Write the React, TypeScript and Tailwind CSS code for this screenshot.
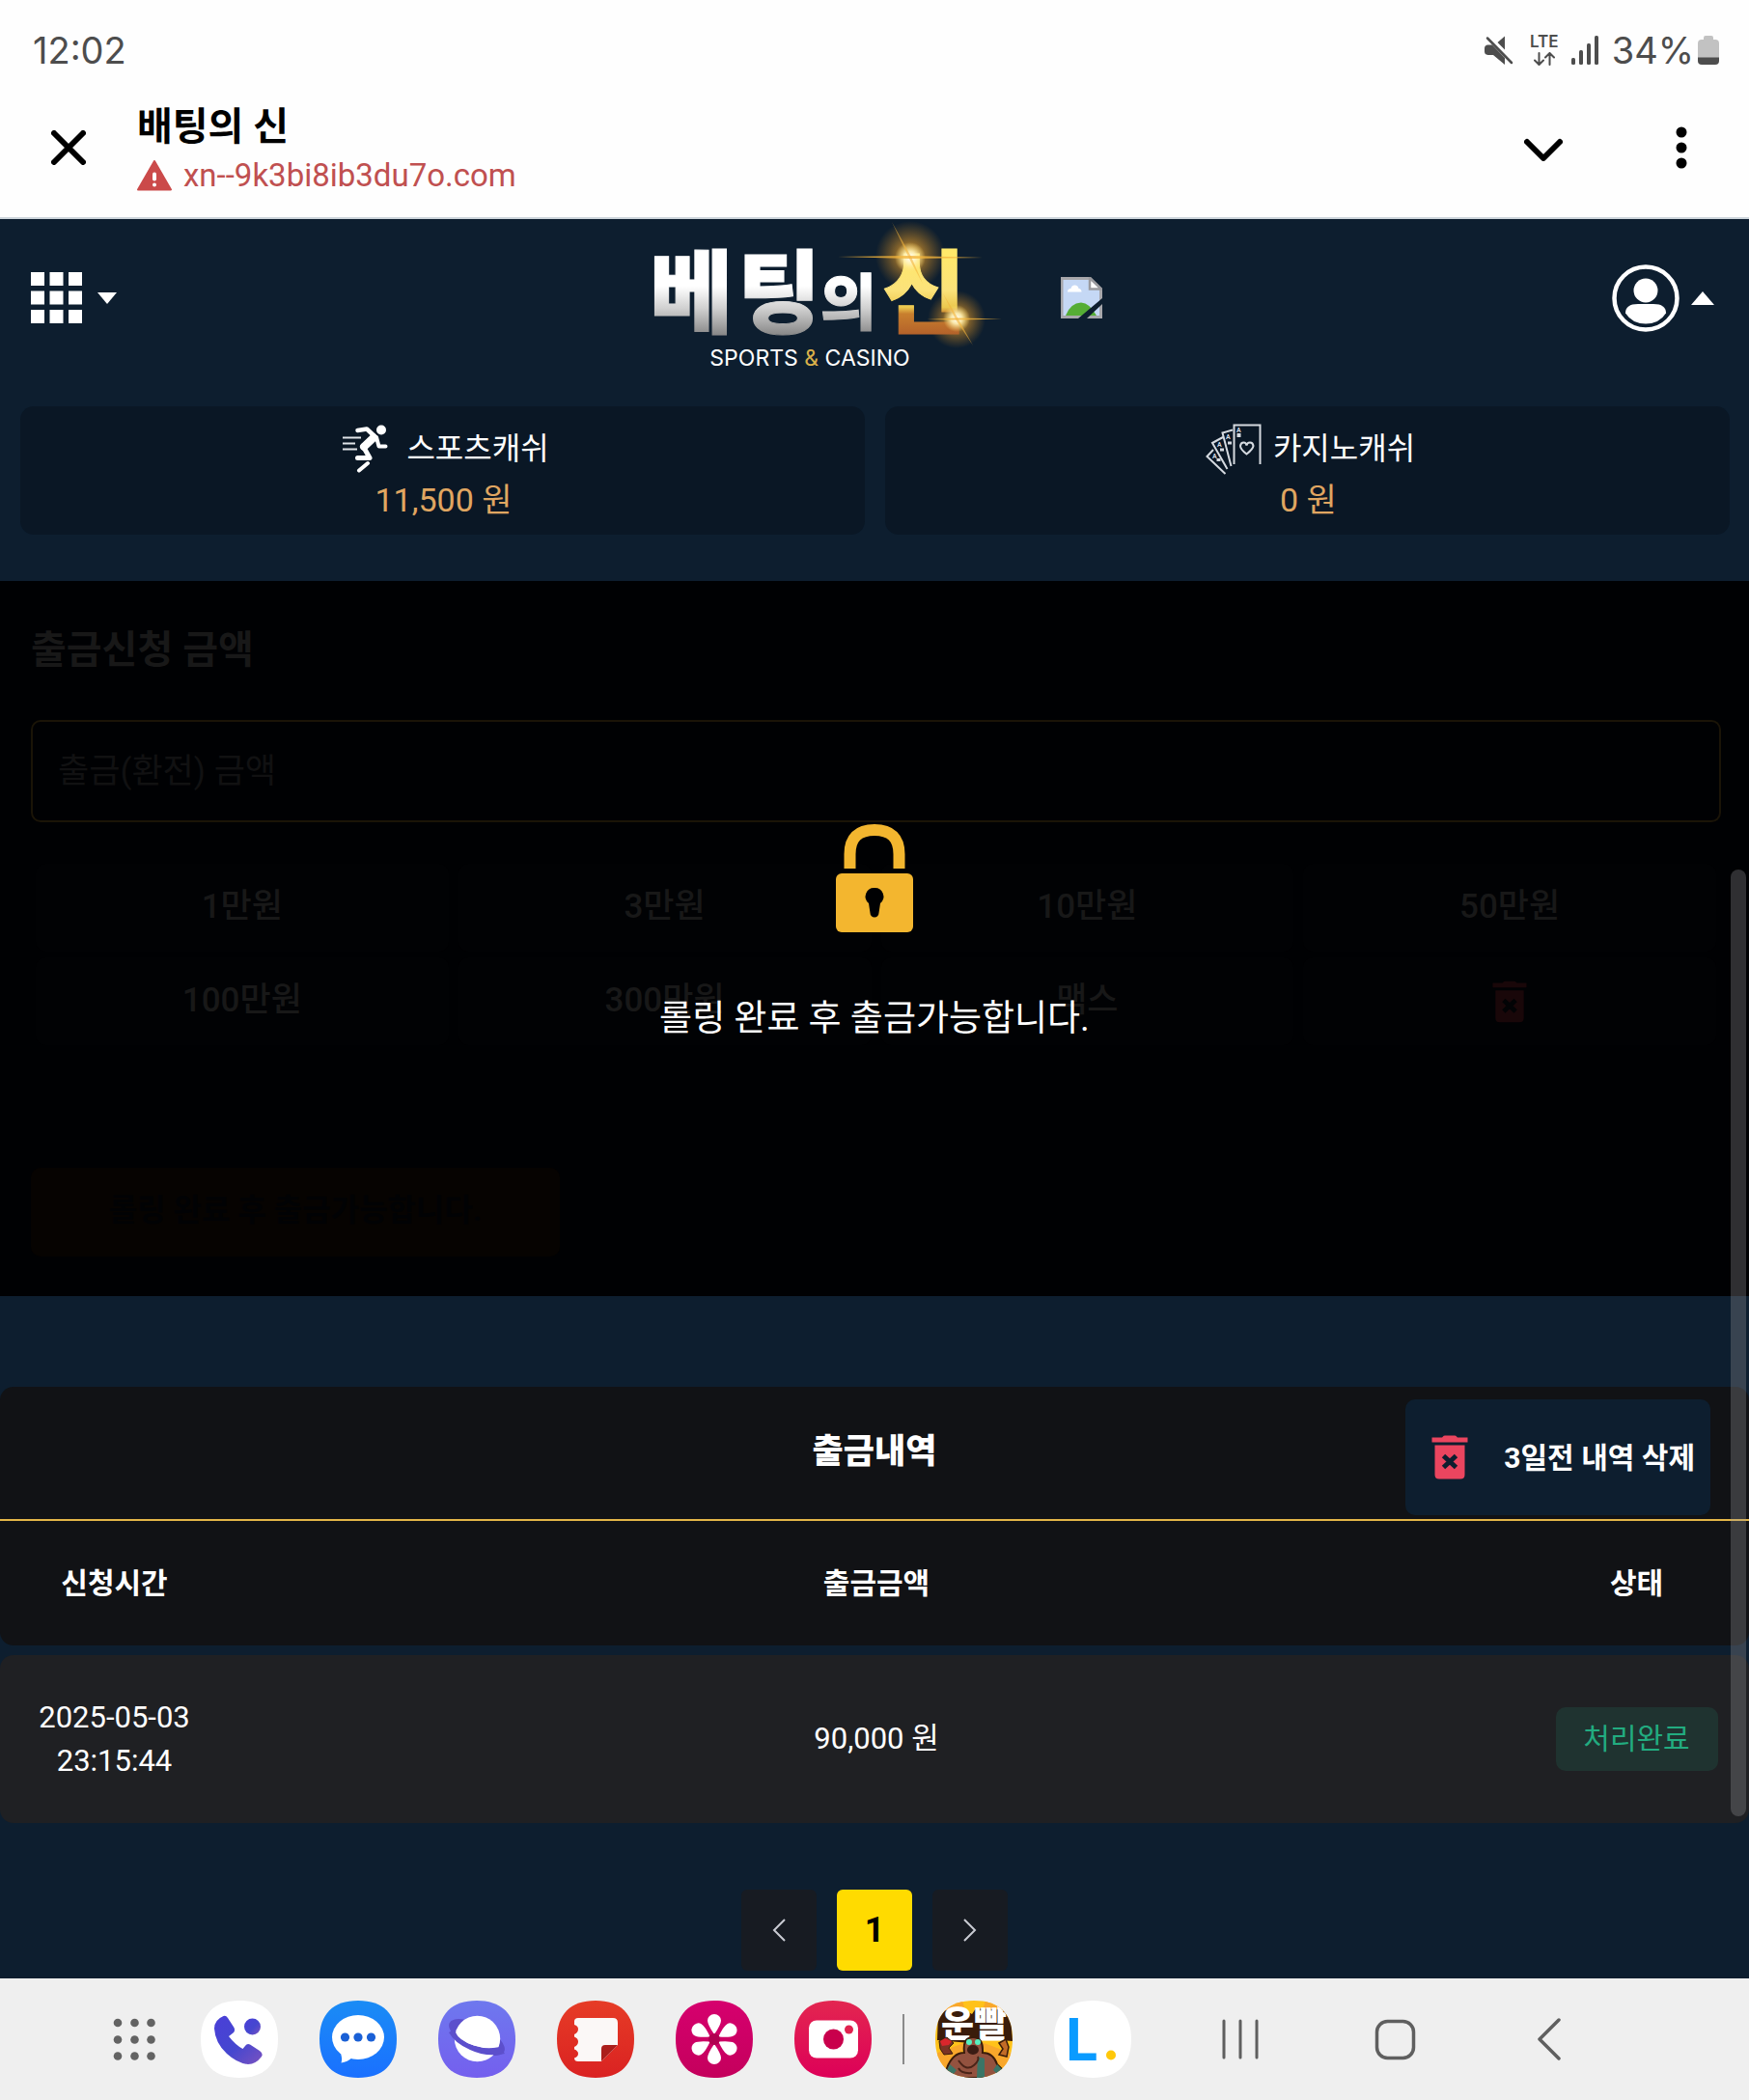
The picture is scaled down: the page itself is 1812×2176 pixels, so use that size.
import type { ReactNode } from "react";

const SQUIRCLE =
  "M40 0C66 0 80 14 80 40S66 80 40 80 0 66 0 40 14 0 40 0Z";

function StatusBar() {
  return (
    <div className="flex h-[76px] items-center justify-between pt-7 pr-[31px] pl-[34px] font-[Inter,sans-serif] text-[38px] leading-[48px] text-[#4d4d4d]">
      <span>12:02</span>
      <div className="flex items-center">
        <svg className="mr-4 h-[30px] w-[30px]" viewBox="0 0 30 30" fill="#4d4d4d" aria-label="음소거">
          <path d="M3 9.500H8L21 23V30L9 20H3.500Q0 19.500 0 16.500V13Q0 10 3 9.500Z" />
          <path d="M21 .5V14.500L13.500 7Z" />
          <path d="M3 2.500 28 28" stroke="#4d4d4d" strokeWidth="2.500" strokeLinecap="round" />
        </svg>
        <div className="mr-3 flex w-8 flex-col items-center gap-1">
          <span className="text-[17px] leading-[14px] font-semibold">LTE</span>
          <svg className="h-[14px] w-[22px]" viewBox="0 0 22 14" fill="none" stroke="#4d4d4d" strokeWidth="2" strokeLinecap="round" strokeLinejoin="round">
            <path d="M5.500 1V12.500M1 8.500 5.500 13 10 8.500M16.500 13V1.500M12 5.500 16.500 1 21 5.500" />
          </svg>
        </div>
        <svg className="mr-[14px] h-[30px] w-[28px]" viewBox="0 0 28 30" fill="#4d4d4d" aria-label="신호">
          <rect x="0" y="23" width="4" height="7" rx="1.500" />
          <rect x="8" y="15" width="4" height="15" rx="1.500" />
          <rect x="16" y="8" width="4" height="22" rx="1.500" />
          <rect x="24" y="0" width="4" height="30" rx="1.500" />
        </svg>
        <span>34%</span>
        <svg className="ml-1 h-[30px] w-[22px]" viewBox="0 0 22 30" aria-label="배터리">
          <path d="M6 2Q6 0 8 0H14Q16 0 16 2V4H18Q22 4 22 8V23H0V8Q0 4 4 4H6Z" fill="#c2c2c2" />
          <path d="M0 22.500H22V26Q22 30 18 30H4Q0 30 0 26Z" fill="#4d4d4d" />
        </svg>
      </div>
    </div>
  );
}

function BrowserBar() {
  return (
    <div className="flex h-[151px] items-center border-b-2 border-[#cdd5db] pt-1 pr-[64px] pl-[53px]">
      <button aria-label="닫기">
        <svg className="h-9 w-9" viewBox="0 0 36 36" stroke="#000" strokeWidth="6" strokeLinecap="round">
          <path d="M3 3 33 33M33 3 3 33" />
        </svg>
      </button>
      <div className="ml-[53px] flex-1 pt-2">
        <p className="text-[40px] leading-[50px] font-bold text-black">배팅의 신</p>
        <p className="flex items-center gap-3 text-[33px] leading-[50px] text-[#c05050]">
          <svg className="h-8 w-9" viewBox="0 0 36 32" aria-hidden="true">
            <path d="M18 1 35 30.500H1Z" fill="#cb4a4a" stroke="#cb4a4a" strokeWidth="2" strokeLinejoin="round" />
            <path d="M18 14.500V19.500" stroke="#fff" strokeWidth="4" strokeLinecap="round" />
            <circle cx="18" cy="25.500" r="2" fill="#fff" />
          </svg>
          <span>xn--9k3bi8ib3du7o.com</span>
        </p>
      </div>
      <button aria-label="펼치기" className="mr-[117px] pt-1">
        <svg className="h-6 w-10" viewBox="0 0 40 24" fill="none" stroke="#000" strokeWidth="6" strokeLinecap="round" strokeLinejoin="round">
          <path d="M3 4 20 21 37 4" />
        </svg>
      </button>
      <button aria-label="메뉴">
        <svg className="h-[44px] w-3" viewBox="0 0 12 44">
          <circle cx="6" cy="6" r="5.500" />
          <circle cx="6" cy="22" r="5.500" />
          <circle cx="6" cy="38" r="5.500" />
        </svg>
      </button>
    </div>
  );
}

function Logo() {
  return (
    <svg className="h-[163px] w-[430px]" viewBox="640 227 430 163" aria-label="베팅의신 SPORTS & CASINO">
      <defs>
        <linearGradient id="silver" gradientUnits="userSpaceOnUse" x1="0" y1="263" x2="0" y2="347">
          <stop offset="0.400" stopColor="#ffffff" />
          <stop offset="0.680" stopColor="#cfcfcf" />
          <stop offset="1" stopColor="#888888" />
        </linearGradient>
        <linearGradient id="gold" gradientUnits="userSpaceOnUse" x1="0" y1="263" x2="0" y2="347">
          <stop offset="0" stopColor="#ffe96a" />
          <stop offset="0.450" stopColor="#fbe27a" />
          <stop offset="0.660" stopColor="#ecc84e" />
          <stop offset="0.740" stopColor="#c87f2e" />
          <stop offset="1" stopColor="#b3612a" />
        </linearGradient>
        <radialGradient id="halo">
          <stop offset="0" stopColor="#f0b040" />
          <stop offset="0.400" stopColor="#d9952a" stopOpacity="0.600" />
          <stop offset="1" stopColor="#b87a1e" stopOpacity="0" />
        </radialGradient>
        <radialGradient id="core">
          <stop offset="0" stopColor="#ffffff" />
          <stop offset="0.400" stopColor="#fff3b8" stopOpacity="0.900" />
          <stop offset="1" stopColor="#ffe070" stopOpacity="0" />
        </radialGradient>
      </defs>
      <circle cx="943" cy="265" r="36" fill="url(#halo)" />
      <circle cx="991" cy="331" r="30" fill="url(#halo)" />
      <g className="font-['Noto_Sans_CJK_KR',sans-serif] font-black" fontWeight="900">
        <text x="673" y="338" fontSize="94" fill="url(#silver)" stroke="url(#silver)" strokeWidth="1">베</text>
        <text x="764" y="338" fontSize="94" fill="url(#silver)" stroke="url(#silver)" strokeWidth="1">팅</text>
        <text x="850" y="336" fontSize="63" fill="url(#silver)" stroke="url(#silver)" strokeWidth="1">의</text>
        <text x="914" y="338" fontSize="94" fill="url(#gold)" stroke="url(#gold)" strokeWidth="1">신</text>
      </g>
      <circle cx="943" cy="267" r="16" fill="url(#core)" />
      <circle cx="991" cy="330" r="14" fill="url(#core)" />
      <g fill="#f3b43c">
        <path d="M868 266 943 265 1020 267 943 268Z" opacity=".8" />
        <path d="M960 331 991 329.500 1038 330.500 991 331.500Z" opacity=".8" />
        <path d="M924 230 944 266 956 294 942 268Z" opacity=".6" />
        <path d="M977 304 992 329 1008 358 990 331Z" opacity=".6" />
      </g>
      <text x="839" y="379" textAnchor="middle" fontSize="23" fill="#ffffff" className="font-[Inter,sans-serif]">
        SPORTS <tspan fill="#d9b04a">&amp;</tspan> CASINO
      </text>
    </svg>
  );
}

function BrokenImage() {
  return (
    <svg className="mr-[30px] ml-[29px] h-[43px] w-[43px]" viewBox="0 0 43 43" aria-label="이미지 없음">
      <path d="M0 0H31L43 12V43H0Z" fill="#a7a7ab" />
      <path d="M2.500 3H29L40 14V40H2.500Z" fill="#c5d8f5" />
      <path d="M7 15.500Q7 12 10.500 12Q11 8.500 14.500 8.500Q18 8.500 18.500 12Q21.500 12 21.500 15.500Z" fill="#fff" />
      <path d="M5 40Q10 27 21 26.500Q30 27 37 40Z" fill="#55ad35" />
      <path d="M30 1V12.500H42Z" fill="#fff" stroke="#9a9a9e" strokeWidth="2.500" />
      <path d="M43 22V28L27 43H18Z" fill="#0d1e2f" />
    </svg>
  );
}

function SiteHeader() {
  return (
    <header className="grid grid-cols-[1fr_auto_1fr] items-center">
      <button aria-label="전체 메뉴" className="flex items-center gap-4 justify-self-start pl-8">
        <svg className="h-[53px] w-[53px]" viewBox="0 0 53 53" fill="#fff">
          <path d="M0 0h14v14H0zM19.500 0h14v14h-14zM39 0h14v14H39zM0 19.500h14v14H0zM19.500 19.500h14v14h-14zM39 19.500h14v14H39zM0 39h14v14H0zM19.500 39h14v14h-14zM39 39h14v14H39z" />
        </svg>
        <svg className="h-3 w-5" viewBox="0 0 20 12" fill="#fff"><path d="M0 0H20L10 12Z" /></svg>
      </button>
      <div className="flex items-center">
        <Logo />
        <BrokenImage />
      </div>
      <button aria-label="내 정보" className="flex items-center gap-3 justify-self-end pr-9">
        <svg className="h-[70px] w-[70px]" viewBox="0 0 70 70" fill="#fff">
          <circle cx="35" cy="35" r="32.500" fill="none" stroke="#fff" strokeWidth="4.500" />
          <circle cx="35" cy="27" r="12.500" />
          <path d="M14 50.500Q14 41 27 41H43Q56 41 56 50.500Q49 61.500 35 61.500T14 50.500Z" />
        </svg>
        <svg className="h-[14px] w-6" viewBox="0 0 24 14" fill="#fff"><path d="M0 14H24L12 0Z" /></svg>
      </button>
    </header>
  );
}

function RunnerIcon() {
  return (
    <svg className="h-[50px] w-[48px]" viewBox="0 0 48 50" fill="none" stroke="#fff" strokeLinecap="round" strokeLinejoin="round" aria-hidden="true">
      <circle cx="41" cy="5.500" r="5" fill="#fff" stroke="none" />
      <path d="M1 13.500H20M1 19.500H14M1 25.500H16" strokeWidth="2" strokeLinecap="butt" stroke="#dfe3e8" />
      <path d="M16.500 6 26 4.500 34 12" strokeWidth="4.500" />
      <path d="M33 13.500 23 23" strokeWidth="8" />
      <path d="M36 13 38.500 22.500H45.500" strokeWidth="4" />
      <path d="M22 22 29 34.500H16.500" strokeWidth="5" />
      <path d="M27 40 18 47.500" strokeWidth="4" />
    </svg>
  );
}

function CardsIcon() {
  return (
    <svg className="h-[53px] w-[58px]" viewBox="0 0 58 53" fill="none" stroke="#d5dae0" strokeWidth="2" aria-hidden="true">
      <path d="M29.500 42V1.500H56.500V42M28 6.500 17.500 9.500 26.500 44M18 14 7 20 22.500 47M8 27 1.500 34 20.500 52" />
      <path d="M42.500 31.500Q36 26.500 36 23Q36.500 19.500 39.500 19.500Q42 19.500 42.500 22.500Q43 19.500 46 19.500Q49 19.500 49.500 23Q49 26.500 42.500 31.500Z" />
      <path d="M34.500 10v4M25 18.500v3M17 25.500v3M13.500 36v3" strokeWidth="4" />
      <g fill="#d5dae0" stroke="none" fontSize="7" fontWeight="700" className="font-[Roboto,sans-serif]">
        <text x="32" y="9">A</text>
        <text x="21" y="16">A</text>
        <text x="12" y="24">A</text>
        <text x="7" y="36">A</text>
      </g>
    </svg>
  );
}

function CashCard({ icon, label, amount }: { icon: ReactNode; label: string; amount: string }) {
  return (
    <section className="flex h-[133px] flex-1 flex-col items-center rounded-[14px] bg-[#0a1725] pt-[17px]">
      <h2 className="flex h-[54px] items-center pl-[6px] text-[32px] leading-[48px] text-white">{icon}{label}</h2>
      <p className="pl-[2px] text-[34px] leading-[52px] text-[#e0a661]">{amount}</p>
    </section>
  );
}

function TrashIcon({ className, color, cross }: { className: string; color: string; cross: string }) {
  return (
    <svg className={className} viewBox="0 0 38 46" aria-hidden="true">
      <path d="M12 1.500Q12.500 .5 14 .5H24Q25.500 .5 26 1.500L27 2.500H37.500V7.500H.5V2.500H11Z" fill={color} />
      <path d="M3.500 10.500H34.500V41Q34.500 45.500 30 45.500H8Q3.500 45.500 3.500 41Z" fill={color} />
      <path d="M12.500 21.500 25.500 33.500M25.500 21.500 12.500 33.500" stroke={cross} strokeWidth="5" />
    </svg>
  );
}

function LockIcon() {
  return (
    <svg className="h-[113px] w-[80px]" viewBox="0 0 80 113" aria-hidden="true">
      <path d="M14.500 46V31Q14.500 6 40 6T65.500 31V46" fill="none" stroke="#f3b62f" strokeWidth="12" />
      <rect x="0" y="51" width="80" height="61" rx="6" fill="#f3b62f" />
      <path d="M40 66a9 9 0 0 1 6 16L44.500 92a4.500 4.500 0 0 1-9 0L34 82a9 9 0 0 1 6-16Z" fill="#000103" />
    </svg>
  );
}

const AMOUNTS = ["1만원", "3만원", "10만원", "50만원", "100만원", "300만원", "맥스"];

function WithdrawForm() {
  return (
    <section className="relative mt-12 h-[741px] bg-[#000103] px-8 pt-[44px]">
      <label htmlFor="amount" className="block text-[40px] leading-[56px] font-bold text-[#181818]">출금신청 금액</label>
      <input
        id="amount"
        placeholder="출금(환전) 금액"
        className="mt-[44px] block h-[106px] w-[calc(100%+3px)] rounded-[10px] border-2 border-[#1a1407] bg-transparent px-[26px] text-[35px] text-[#181818] placeholder:text-[#111112]"
      />
      <div className="mt-10 grid w-[calc(100%+3px)] grid-cols-4">
        {AMOUNTS.map((a) => (
          <button key={a} className="mx-[5px] my-[3px] h-[91px] rounded-[10px] bg-[#010204] text-[35px] font-medium text-[#181818]">{a}</button>
        ))}
        <button aria-label="지우기" className="mx-[5px] my-[3px] flex h-[91px] items-center justify-center rounded-[10px] bg-[#010204]">
          <TrashIcon className="h-[44px] w-9" color="#190709" cross="#020305" />
        </button>
      </div>
      <button className="mt-[124px] h-[92px] w-[548px] rounded-[10px] bg-[#060301] pb-1 text-[32px] font-bold text-[#010204]">롤링 완료 후 출금가능합니다.</button>
      <div className="absolute inset-0 flex flex-col items-center justify-center pb-2">
        <LockIcon />
        <p className="mt-[62px] text-[37px] leading-[54px] text-white">롤링 완료 후 출금가능합니다.</p>
      </div>
    </section>
  );
}

function History() {
  return (
    <section className="mt-[94px] text-white">
      <div className="grid h-[139px] grid-cols-[1fr_auto_1fr] items-center rounded-t-[14px] border-b-2 border-[#e3b548] bg-[#111215]">
        <h2 className="col-start-2 text-[35px] font-black">출금내역</h2>
        <button className="mr-10 mb-1 flex h-[120px] w-[316px] items-center justify-end self-end justify-self-end rounded-[10px] bg-[#0d1e2f] pr-4 text-[30px] font-bold">
          <TrashIcon className="mr-[37px] h-[46px] w-[38px]" color="#ea455f" cross="#0d1e2f" />
          3일전 내역 삭제
        </button>
      </div>
      <table className="w-full table-fixed border-separate border-spacing-0 text-center text-[31px]">
        <colgroup>
          <col className="w-[237px]" />
          <col />
          <col className="w-[233px]" />
        </colgroup>
        <thead>
          <tr className="h-[129px] text-[30px]">
            <th className="rounded-bl-[14px] bg-[#111215]">신청시간</th>
            <th className="bg-[#111215]">출금금액</th>
            <th className="rounded-br-[14px] bg-[#111215]">상태</th>
          </tr>
        </thead>
        <tbody>
          <tr className="h-[10px]" aria-hidden="true"><td colSpan={3} /></tr>
          <tr className="h-[174px]">
            <td className="rounded-l-[14px] bg-[#1f2023] px-9 leading-[45px]">2025-05-03 23:15:44</td>
            <td className="bg-[#1f2023]">90,000 원</td>
            <td className="rounded-r-[14px] bg-[#1f2023]">
              <span className="inline-block w-[168px] rounded-[10px] bg-[#1f3330] text-[30px] leading-[66px] text-[#22ac80]">처리완료</span>
            </td>
          </tr>
        </tbody>
      </table>
    </section>
  );
}

function PageArrow({ d, label }: { d: string; label: string }) {
  return (
    <button aria-label={label} className="flex h-[84px] w-[78px] items-center justify-center rounded-[6px] bg-[#171b22]">
      <svg className="h-6 w-[14px]" viewBox="0 0 14 24" fill="none" stroke="#c9cbd3" strokeWidth="2"><path d={d} /></svg>
    </button>
  );
}

function AppIcon({ label, fill, children }: { label: string; fill: string; children: ReactNode }) {
  return (
    <button aria-label={label}>
      <svg className="h-20 w-20" viewBox="0 0 80 80"><path d={SQUIRCLE} fill={fill} />{children}</svg>
    </button>
  );
}

function Taskbar() {
  return (
    <nav className="relative flex h-[126px] items-center bg-[#efefef] pl-[117px]">
      <svg width="0" height="0" className="absolute top-0">
        <defs>
          <linearGradient id="gPhone" x1="0" y1="0" x2="1" y2="1"><stop stopColor="#4a3fd8" /><stop offset=".55" stopColor="#4547cf" /><stop offset="1" stopColor="#7a52c0" /></linearGradient>
          <linearGradient id="gMsg" x1="0" y1="0" x2="0" y2="1"><stop stopColor="#1a8cf5" /><stop offset="1" stopColor="#1a70ff" /></linearGradient>
          <linearGradient id="gNet" x1="0" y1="0" x2="0" y2="1"><stop stopColor="#6e78ee" /><stop offset="1" stopColor="#745fee" /></linearGradient>
          <linearGradient id="gNote" x1="0" y1="0" x2="0" y2="1"><stop stopColor="#e63c26" /><stop offset="1" stopColor="#da2222" /></linearGradient>
          <linearGradient id="gGal" x1="0" y1="0" x2="0" y2="1"><stop stopColor="#d6006e" /><stop offset="1" stopColor="#c4005c" /></linearGradient>
          <linearGradient id="gCam" x1="0" y1="0" x2="0" y2="1"><stop stopColor="#e32650" /><stop offset="1" stopColor="#dd0058" /></linearGradient>
          <clipPath id="squircle"><path d={SQUIRCLE} /></clipPath>
        </defs>
      </svg>
      <button aria-label="앱" className="mr-[47px]">
        <svg className="h-11 w-11" viewBox="0 0 44 44" fill="#636363">
          {[5, 22.5, 39.5].map((y) => [5, 22.5, 39.5].map((x) => <circle key={`${x}-${y}`} cx={x} cy={y} r="4.3" />))}
        </svg>
      </button>
      <div className="flex items-center gap-[43px]">
        <AppIcon label="전화" fill="#fff">
          <path d="M23.500 16Q14 20 14 29Q15 44 27 55Q38 65 49 66Q57 66 63 58Q65 55 61 52L51 45.500Q48 44 46 47L43.500 50Q36 46 29 37L33.500 33.500Q36 31.500 34.500 28L28 18Q26 15 23.500 16Z" fill="url(#gPhone)" />
          <circle cx="53.500" cy="27" r="8.500" fill="url(#gPhone)" />
        </AppIcon>
        <AppIcon label="메시지" fill="url(#gMsg)">
          <ellipse cx="40" cy="38" rx="27" ry="23" fill="#fff" />
          <path d="M22 55Q24 60 22.500 64.500Q29 63.500 34 59Z" fill="#fff" />
          <g fill="#1a60d6"><circle cx="26.500" cy="38" r="4.600" /><circle cx="40" cy="38" r="4.600" /><circle cx="53.500" cy="38" r="4.600" /></g>
        </AppIcon>
        <AppIcon label="인터넷" fill="url(#gNet)">
          <ellipse cx="40" cy="38" rx="32" ry="13" transform="rotate(28 40 38)" fill="#5c4fcc" />
          <circle cx="40.500" cy="39.500" r="23.700" fill="#fff" />
          <path d="M17 29.500Q22 42 37 46.500Q50 51 64 48L69 55Q50 59 33 51Q17 44 11 33Z" fill="#5c4fcc" />
          <path d="M18 33Q21 41 37 46.500Q52 51 63 47L62 36 45 20 24 26Z" fill="#fff" />
        </AppIcon>
        <AppIcon label="노트" fill="url(#gNote)">
          <path d="M22 18H58Q63 18 63 23V46L46 63H22Q18 63 18 59.500Q22 58 22 55T18 50.500V48Q22 46 22 42.500T18 37.500V35Q22 33 22 29.500T18 25V21.500Q18 18 22 18Z" fill="#fbf8f7" />
          <path d="M46 63V50Q46 46 50 46H63Z" fill="#ab1f1c" />
        </AppIcon>
        <AppIcon label="갤러리" fill="url(#gGal)">
          {[0, 60, 120, 180, 240, 300].map((a) => (
            <path key={a} transform={`rotate(${a} 40 40)`} d="M40 35Q33 25 33 20.500A7 6.500 0 0 1 47 20.500Q47 25 40 35Z" fill="#fff" />
          ))}
          <circle cx="40" cy="40" r="6" fill="#b00050" />
        </AppIcon>
        <AppIcon label="카메라" fill="url(#gCam)">
          <rect x="15" y="20.500" width="51" height="39" rx="8" fill="#fff" />
          <circle cx="40.500" cy="40" r="10.500" fill="#c9004c" />
          <circle cx="56.500" cy="30" r="4.500" fill="#e0224f" />
        </AppIcon>
      </div>
      <div className="mx-8 h-[52px] w-[2px] bg-[#8a8a8a]" />
      <button aria-label="운빨">
        <svg className="h-20 w-20" viewBox="0 0 80 80">
          <g clipPath="url(#squircle)">
            <rect width="80" height="80" fill="#ffc21a" />
            <path d="M40 40 28 0H0V18ZM40 40 52 0H80V18ZM40 40 0 55V80ZM40 40 80 55V80Z" fill="#f9a72b" />
            <path d="M3 12 26 7 38 14 42 8 78 10 80 42 54 40 36 44 2 41Z" fill="#3a1c0a" />
            <text x="40" y="38" textAnchor="middle" fontSize="37" fontWeight="900" fill="#fff" className="font-['Noto_Sans_CJK_KR',sans-serif]">운빨</text>
            <path d="M30 54Q28 38 39 38T49 54Q60 54 64 66L74 76V80H8L12 70Q18 54 30 54Z" fill="#93523f" stroke="#3a1c0a" strokeWidth="2" />
            <path d="M44 58 51 60V80H43Z" fill="#3b7566" />
            <path d="M15 66 22 72 16 80 10 76ZM64 66 70 72 66 78 60 72Z" fill="#3b7566" />
            <path d="M24 62Q32 74 40 67Q46 62 44 58M24 70Q27 76 38 75" fill="none" stroke="#4a2418" strokeWidth="2" />
            <ellipse cx="39" cy="51" rx="6" ry="5" fill="#3a1c14" />
            <circle cx="35" cy="43" r="3" fill="#56f0c0" />
            <circle cx="44" cy="43" r="3" fill="#56f0c0" />
            <path d="M4 42 12 38 19 44 14 49 18 55 9 56 5 50Z" fill="#7a3324" stroke="#3a1c0a" strokeWidth="1" />
            <path d="M5 42 10 39 17 42 14 46 7 47Z" fill="#d9262c" />
            <path d="M66 44 73 40 76 48 74 58 66 56 70 50Z" fill="#c26b27" stroke="#3a1c0a" strokeWidth="1.500" />
          </g>
        </svg>
      </button>
      <button aria-label="L." className="ml-[43px]">
        <svg className="h-20 w-20" viewBox="0 0 80 80">
          <path d={SQUIRCLE} fill="#fff" />
          <text x="12" y="62" fontSize="60" fontWeight="700" fill="#0a9bff" className="font-[Inter,sans-serif]">L</text>
          <circle cx="59" cy="56.500" r="5" fill="#ffc80a" />
        </svg>
      </button>
      <div className="mr-[185px] ml-auto flex items-center gap-[116px]">
        <button aria-label="최근 앱">
          <svg className="h-11 w-11" viewBox="0 0 44 44" stroke="#5f5f5f" strokeWidth="3" strokeLinecap="round"><path d="M5 3V41M22 3V41M39 3V41" /></svg>
        </button>
        <button aria-label="홈">
          <svg className="h-11 w-11" viewBox="0 0 44 44" fill="none" stroke="#5f5f5f" strokeWidth="3.500"><rect x="3.500" y="3.500" width="38" height="38" rx="11" /></svg>
        </button>
        <button aria-label="뒤로">
          <svg className="h-11 w-11" viewBox="0 0 44 44" fill="none" stroke="#5f5f5f" strokeWidth="3.500" strokeLinecap="round" strokeLinejoin="round"><path d="M32 2 12 22 32 42" /></svg>
        </button>
      </div>
    </nav>
  );
}

export default function App() {
  return (
    <div lang="ko" className="relative flex min-h-screen flex-col bg-[#0d1e2f] font-[Roboto,'Noto_Sans_CJK_KR',sans-serif]">
      <div className="bg-[#fefefe]">
        <StatusBar />
        <BrowserBar />
      </div>
      <main>
        <SiteHeader />
        <div className="mt-[31px] flex gap-[21px] pr-5 pl-[21px]">
          <CashCard icon={<span className="mr-[19px]"><RunnerIcon /></span>} label="스포츠캐쉬" amount="11,500 원" />
          <CashCard icon={<span className="mr-3"><CardsIcon /></span>} label="카지노캐쉬" amount="0 원" />
        </div>
        <WithdrawForm />
        <History />
        <div className="mt-[69px] mb-[7px] flex justify-center gap-[21px]">
          <PageArrow d="M13 1 2 12 13 23" label="이전" />
          <button className="h-[84px] w-[78px] rounded-[6px] bg-[#ffdb00] text-[36px] font-bold text-black">1</button>
          <PageArrow d="M1 1 12 12 1 23" label="다음" />
        </div>
      </main>
      <div className="mt-auto"><Taskbar /></div>
      <div className="absolute top-[901px] right-[3px] h-[981px] w-4 rounded-full bg-[#9a9aa0]/30" />
    </div>
  );
}
